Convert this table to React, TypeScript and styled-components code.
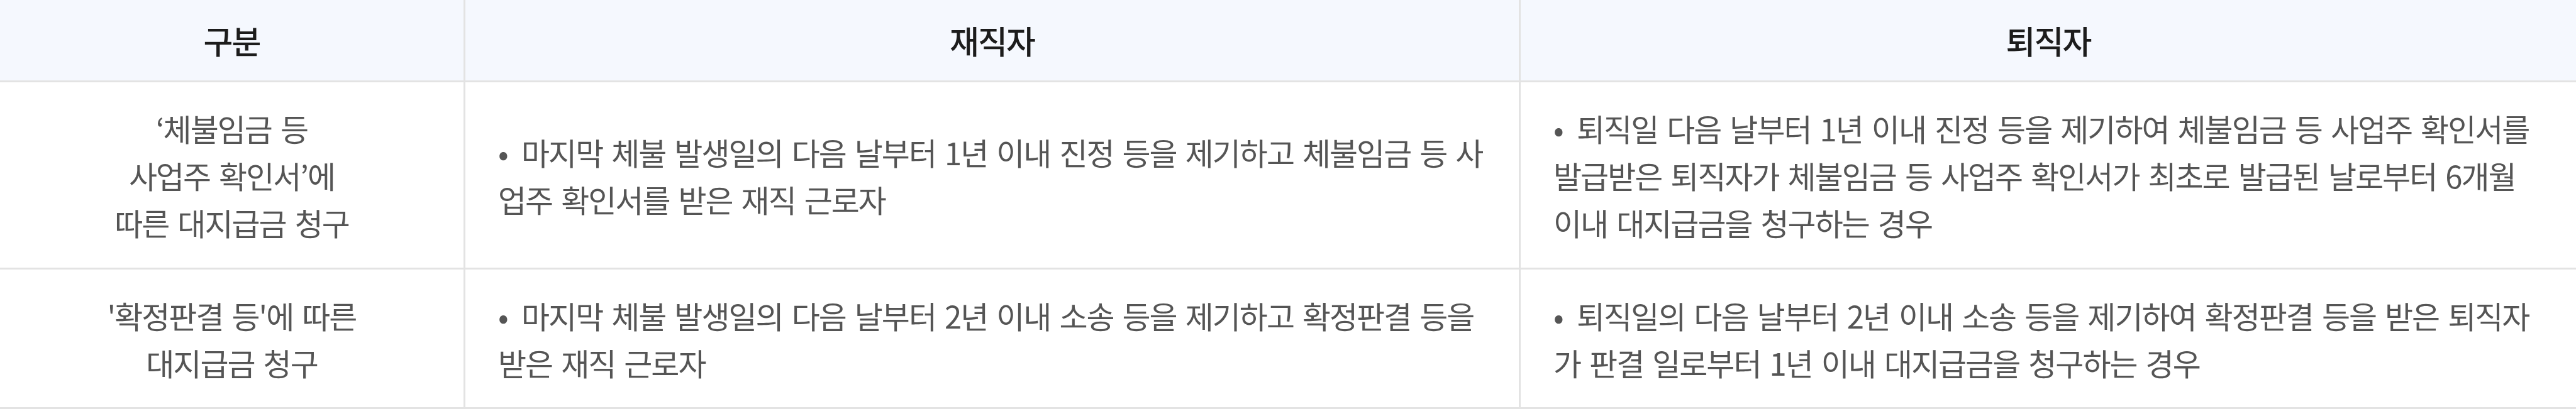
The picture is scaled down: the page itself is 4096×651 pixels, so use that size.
import React from 'react';
import styled, { createGlobalStyle } from 'styled-components';

const GlobalStyle = createGlobalStyle`
    html, body {
        margin: 0;
        padding: 0;
        background: #ffffff;
    }
    body {
        font-family: "Noto Sans CJK KR", "Noto Sans", sans-serif;
    }
`

const Table = styled.div`
    display: grid;
    grid-template-columns: 737px 1678px 1681px;
    grid-template-rows: 131px 298px 222px;
    width: 4096px;
`

const HeadCell = styled.div<{ $first?: boolean }>`
    box-sizing: border-box;
    display: flex;
    align-items: center;
    justify-content: center;
    background: #f5f8fe;
    border-bottom: 3px solid #e3e3e3;
    border-left: ${p => (p.$first ? '0' : '3px solid #e3e3e3')};
    color: #1c1c1c;
    font-size: 51px;
    font-weight: 500;
    letter-spacing: -2px;
`

const Cell = styled.div<{ $first?: boolean }>`
    box-sizing: border-box;
    display: flex;
    align-items: center;
    justify-content: ${p => (p.$first ? 'center' : 'flex-start')};
    padding: ${p => (p.$first ? '0' : '0 20px 0 52px')};
    border-bottom: 3px solid #e3e3e3;
    border-left: ${p => (p.$first ? '0' : '3px solid #e3e3e3')};
    text-align: ${p => (p.$first ? 'center' : 'left')};
`

const Text = styled.p`
    margin: 0;
    color: #555555;
    font-size: 49px;
    line-height: 75px;
    letter-spacing: -2px;
    word-spacing: 5px;
    white-space: nowrap;
`

const Bullet = styled.span`
    display: inline-block;
    width: 37px;
    color: #555555;
`

type Row = {
    label: string[],
    employed: string[],
    retired: string[]
}

const rows: Row[] = [
    {
        label: ['‘체불임금 등', '사업주 확인서’에', '따른 대지급금 청구'],
        employed: [
            '마지막 체불 발생일의 다음 날부터 1년 이내 진정 등을 제기하고 체불임금 등 사',
            '업주 확인서를 받은 재직 근로자'
        ],
        retired: [
            '퇴직일 다음 날부터 1년 이내 진정 등을 제기하여 체불임금 등 사업주 확인서를',
            '발급받은 퇴직자가 체불임금 등 사업주 확인서가 최초로 발급된 날로부터 6개월',
            '이내 대지급금을 청구하는 경우'
        ]
    },
    {
        label: ["'확정판결 등'에 따른", '대지급금 청구'],
        employed: [
            '마지막 체불 발생일의 다음 날부터 2년 이내 소송 등을 제기하고 확정판결 등을',
            '받은 재직 근로자'
        ],
        retired: [
            '퇴직일의 다음 날부터 2년 이내 소송 등을 제기하여 확정판결 등을 받은 퇴직자',
            '가 판결 일로부터 1년 이내 대지급금을 청구하는 경우'
        ]
    }
]

const Lines = ({lines, bullet}: { lines: string[], bullet?: boolean }) => (
    <Text>
        {lines.map((line, i) => (
            <React.Fragment key={i}>
                {i > 0 && <br/>}
                {bullet && i === 0 && <Bullet>•</Bullet>}
                {line}
            </React.Fragment>
        ))}
    </Text>
)

export default function App() {
    return (
        <>
            <GlobalStyle/>
            <Table>
                <HeadCell $first>구분</HeadCell>
                <HeadCell>재직자</HeadCell>
                <HeadCell>퇴직자</HeadCell>
                {rows.map((row, i) => (
                    <React.Fragment key={i}>
                        <Cell $first><Lines lines={row.label}/></Cell>
                        <Cell><Lines lines={row.employed} bullet/></Cell>
                        <Cell><Lines lines={row.retired} bullet/></Cell>
                    </React.Fragment>
                ))}
            </Table>
        </>
    );
}
